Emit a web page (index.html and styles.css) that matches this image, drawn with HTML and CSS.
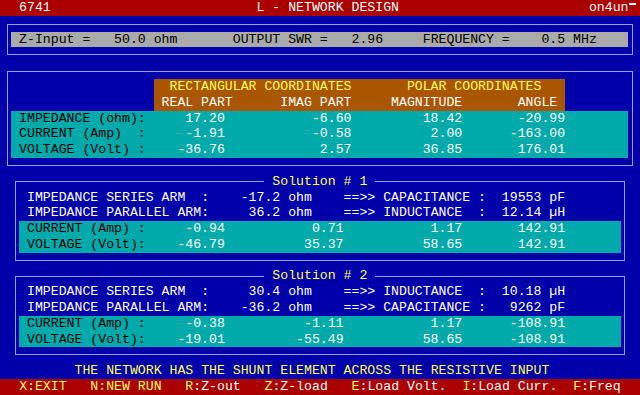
FILE: index.html
```html
<!DOCTYPE html>
<html lang="en">
<head>
  <meta charset="UTF-8" />
  <meta name="viewport" content="width=device-width, initial-scale=1.0"/>
  <title>L - Network Design</title>
  <link rel="stylesheet" href="styles.css">
</head>
<body>
  <div class="topbar">  6741                          L - NETWORK DESIGN                        on4un<span class="tick"></span></div>

  <div class="main">
    <div class="box">
      <div class="line input"> Z-Input =   50.0 ohm       OUTPUT SWR =   2.96     FREQUENCY =    0.5 MHz</div>
    </div>

    <div class="box">
      <div class="coords">
        <div class="line yellow">  RECTANGULAR COORDINATES       POLAR COORDINATES</div>
        <div class="line"> REAL PART      IMAG PART     MAGNITUDE       ANGLE</div>
      </div>
      <div class="values">
        <div class="vrow main-cols"><span class="label">IMPEDANCE (ohm):</span><span>17.20</span><span>-6.60</span><span>18.42</span><span>-20.99</span></div>
        <div class="vrow main-cols"><span class="label">CURRENT (Amp)  :</span><span>-1.91</span><span>-0.58</span><span>2.00</span><span>-163.00</span></div>
        <div class="vrow main-cols"><span class="label">VOLTAGE (Volt) :</span><span>-36.76</span><span>2.57</span><span>36.85</span><span>176.01</span></div>
      </div>
    </div>

    <fieldset class="solution">
      <legend> Solution # 1 </legend>
      <div class="line"> IMPEDANCE SERIES ARM  :    -17.2 ohm    ==&gt;&gt; CAPACITANCE :  19553 pF</div>
      <div class="line"> IMPEDANCE PARALLEL ARM:     36.2 ohm    ==&gt;&gt; INDUCTANCE  :  12.14 µH</div>
      <div class="values">
        <div class="vrow sol-cols"><span class="label">CURRENT (Amp) :</span><span>-0.94</span><span>0.71</span><span>1.17</span><span>142.91</span></div>
        <div class="vrow sol-cols"><span class="label">VOLTAGE (Volt):</span><span>-46.79</span><span>35.37</span><span>58.65</span><span>142.91</span></div>
      </div>
    </fieldset>

    <fieldset class="solution">
      <legend> Solution # 2 </legend>
      <div class="line"> IMPEDANCE SERIES ARM  :     30.4 ohm    ==&gt;&gt; INDUCTANCE  :  10.18 µH</div>
      <div class="line"> IMPEDANCE PARALLEL ARM:    -36.2 ohm    ==&gt;&gt; CAPACITANCE :   9262 pF</div>
      <div class="values">
        <div class="vrow sol-cols"><span class="label">CURRENT (Amp) :</span><span>-0.38</span><span>-1.11</span><span>1.17</span><span>-108.91</span></div>
        <div class="vrow sol-cols"><span class="label">VOLTAGE (Volt):</span><span>-19.01</span><span>-55.49</span><span>58.65</span><span>-108.91</span></div>
      </div>
    </fieldset>

    <div class="line message">THE NETWORK HAS THE SHUNT ELEMENT ACROSS THE RESISTIVE INPUT</div>
  </div>

  <div class="footer">  <span class="key">X:EXIT</span>   <span class="key">N:NEW RUN</span>   <span class="key">R</span>:Z-out   <span class="key">Z</span>:Z-load   <span class="key">E</span>:Load Volt.  <span class="key">I</span>:Load Curr.  <span class="key">F</span>:Freq</div>
</body>
</html>
```

FILE: styles.css
```css
* { margin: 0; padding: 0; box-sizing: border-box; }

body {
  font-family: "Liberation Mono", "DejaVu Sans Mono", monospace;
  font-size: 13.2px;
  line-height: 15.8px;
  background: #0000aa;
  color: #fff;
  width: 640px;
  height: 395px;
  overflow: hidden;
}

.line {
  height: 15.8px;
  white-space: pre;
}

.topbar,
.footer {
  height: 15.8px;
  padding-left: 3.3px;
  background: #aa0000;
  white-space: pre;
}

.tick {
  display: inline-block;
  width: 1ch;
  height: 2px;
  margin-top: 3px;
  background: #fff;
  vertical-align: top;
}

.main {
  display: flex;
  flex-direction: column;
  width: 80ch;
  margin-left: 3.3px;
}

.box {
  margin: 7.9px calc(0.5ch - 0.5px);
  border: 1px solid #9c9ce6;
  padding: 6.9px calc(0.5ch - 0.5px);
}

.input {
  background: #aaaaaa;
  color: #000;
}

.coords {
  margin-left: 18ch;
  width: 52ch;
  background: #aa5500;
}

.yellow { color: #ffff55; }

.values { background: #00aaaa; }

.vrow {
  display: grid;
  height: 15.8px;
  text-align: right;
}

.vrow .label {
  padding-left: 1ch;
  text-align: left;
  color: #000;
  white-space: pre;
}

.main-cols { grid-template-columns: 17ch 10ch 16ch 14ch 13ch; }
.sol-cols { grid-template-columns: 16ch 10ch 15ch 15ch 13ch; }

.solution {
  min-width: 0;
  margin: 0 calc(1.5ch - 0.5px) 7.9px;
  border: 1px solid #9c9ce6;
  padding: 0 calc(0.5ch - 0.5px) 6.9px;
}

.solution legend {
  margin-left: 31ch;
  padding: 0;
  line-height: 15.8px;
  color: #ffff55;
  white-space: pre;
}

.message {
  padding-left: 9ch;
  color: #ffff55;
}

.key { color: #ffff55; }
```
